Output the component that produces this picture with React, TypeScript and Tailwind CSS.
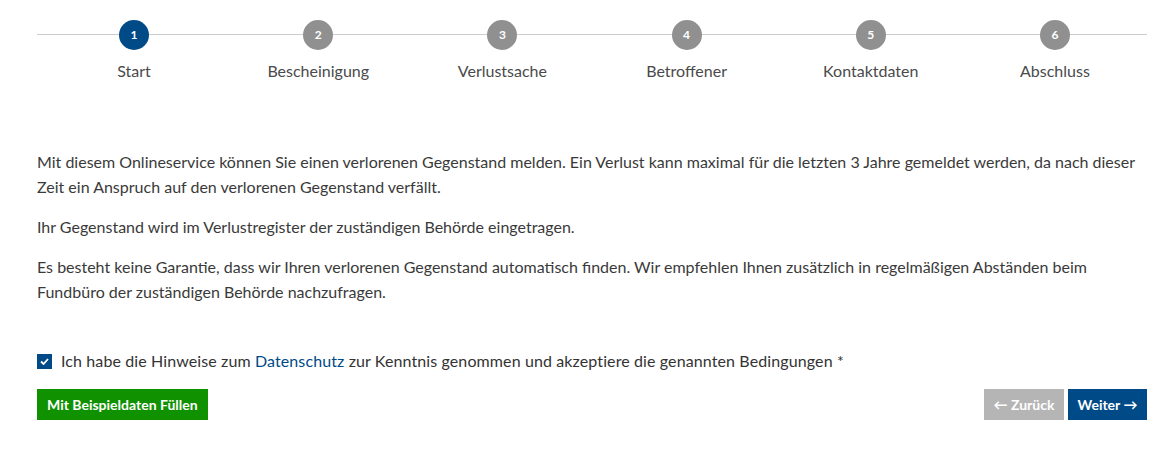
import React from "react";

const steps = ["Start", "Bescheinigung", "Verlustsache", "Betroffener", "Kontaktdaten", "Abschluss"];

export default function App() {
  return (
    <div className="w-[1160px] h-[465px] bg-white" style={{ fontFamily: "Lato, 'Noto Sans', sans-serif" }}>
      <div className="ml-[37px] w-[1110px] pt-[20px]">
        <div className="relative">
          <div className="absolute left-0 right-0 top-[14px] h-px bg-[#cccccc]" />
          <div className="relative grid grid-cols-6 pl-[5px]">
            {steps.map((s, i) => (
              <div key={s} className="flex flex-col items-center">
                <div
                  className={
                    i === 0
                      ? "w-[30px] h-[30px] rounded-full bg-[#004a88] text-white text-[12px] font-bold flex items-center justify-center"
                      : "w-[30px] h-[30px] rounded-full bg-[#909090] text-white text-[12px] font-bold flex items-center justify-center"
                  }
                >
                  {i + 1}
                </div>
                <div className="mt-[10px] text-[16px] leading-[22px] text-[#4a4a4a]">{s}</div>
              </div>
            ))}
          </div>
        </div>

        <div className="mt-[67px] text-[16px] leading-[25px] text-[#3a3a3a]">
          <p className="mb-[15px]">
            Mit diesem Onlineservice können Sie einen verlorenen Gegenstand melden. Ein Verlust kann maximal für die letzten 3 Jahre gemeldet werden, da nach dieser Zeit ein Anspruch auf den verlorenen Gegenstand verfällt.
          </p>
          <p className="mb-[15px]">Ihr Gegenstand wird im Verlustregister der zuständigen Behörde eingetragen.</p>
          <p>
            Es besteht keine Garantie, dass wir Ihren verlorenen Gegenstand automatisch finden. Wir empfehlen Ihnen zusätzlich in regelmäßigen Abständen beim Fundbüro der zuständigen Behörde nachzufragen.
          </p>
        </div>

        <div className="mt-[46px] flex items-center gap-[9px]">
          <div className="w-[15px] h-[15px] bg-[#004a88] flex items-center justify-center">
            <svg width="9" height="7" viewBox="0 0 9 7">
              <path d="M1 3.5 L3.5 6 L8 1" fill="none" stroke="white" strokeWidth="1.8" />
            </svg>
          </div>
          <div className="text-[16px] leading-[22px] tracking-[0.11px] text-[#333333]">
            Ich habe die Hinweise zum <span className="text-[#004a88]">Datenschutz</span> zur Kenntnis genommen und akzeptiere die genannten Bedingungen <span>*</span>
          </div>
        </div>

        <div className="mt-[17px] flex items-center justify-between">
          <button className="h-[31px] px-[10px] bg-[#0f9100] text-white text-[14px] font-bold">Mit Beispieldaten Füllen</button>
          <div className="flex gap-[4px]">
            <button className="h-[31px] w-[80px] bg-[#b5b5b5] text-white text-[14px] font-bold">← Zurück</button>
            <button className="h-[31px] w-[79px] bg-[#004a88] text-white text-[14px] font-bold">Weiter →</button>
          </div>
        </div>
      </div>
    </div>
  );
}
